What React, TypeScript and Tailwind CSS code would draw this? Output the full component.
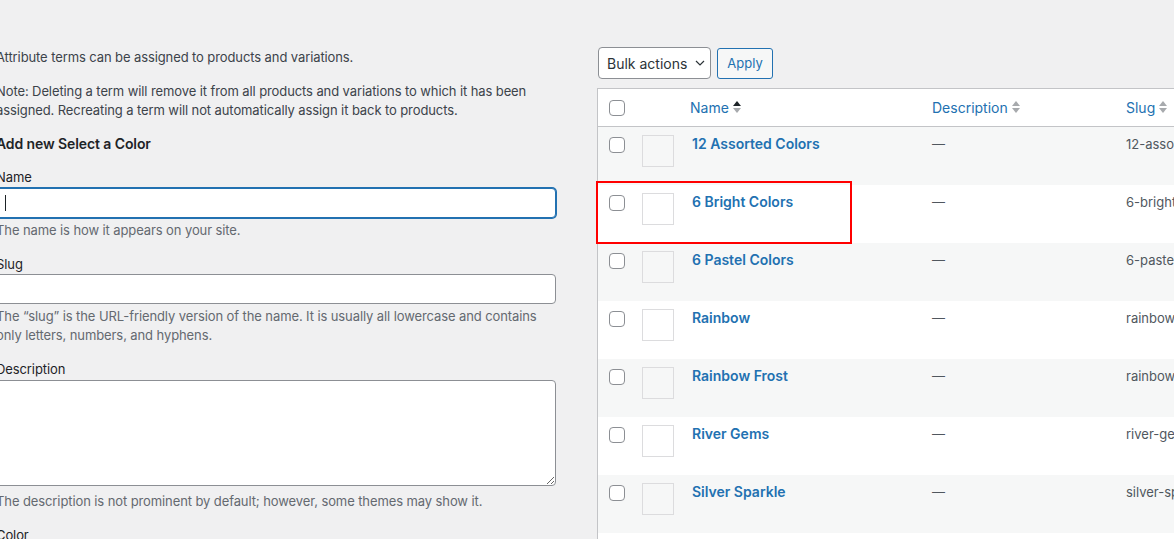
import React from "react";

const terms = [
  { name: "12 Assorted Colors", slug: "12-assorted-colors" },
  { name: "6 Bright Colors", slug: "6-bright-colors" },
  { name: "6 Pastel Colors", slug: "6-pastel-colors" },
  { name: "Rainbow", slug: "rainbow" },
  { name: "Rainbow Frost", slug: "rainbow-frost" },
  { name: "River Gems", slug: "river-gems" },
  { name: "Silver Sparkle", slug: "silver-sparkle" },
  { name: "Starlight", slug: "starlight" },
];

const SortArrows = ({ active }: { active?: boolean }) => (
  <svg width="8" height="12" viewBox="0 0 8 12" className="ml-[4px] shrink-0">
    <path d="M4 0 L8 5 L0 5 Z" fill={active ? "#1d2327" : "#a7aaad"} />
    <path d="M0 7 L8 7 L4 12 Z" fill="#a7aaad" />
  </svg>
);

const Checkbox = () => (
  <div className="w-4 h-4 rounded-[4px] border border-[#8c8f94] bg-white" />
);

const Field = ({
  label,
  help,
  children,
}: {
  label: string;
  help: React.ReactNode;
  children: React.ReactNode;
}) => (
  <div className="mb-[15px]">
    <div className="text-[13px] leading-[19px] text-[#1d2327] mb-[0.5px]">{label}</div>
    {children}
    <p className="text-[13px] leading-[19px] text-[#646970] mt-[3px]">{help}</p>
  </div>
);

export default function App() {
  return (
    <div
      className="w-[1174px] h-[539px] overflow-hidden bg-[#f0f0f1] flex items-start"
      style={{ fontFamily: "Inter, 'Liberation Sans', sans-serif" }}
    >
      {/* Left: add new term */}
      <div className="w-[560px] -ml-[4px] shrink-0 pt-[48px] text-[#3c434a] tracking-[-0.1px]">
        <p className="text-[13px] leading-[19px] mb-[15px]">
          Attribute terms can be assigned to products and variations.
        </p>
        <p className="text-[13px] leading-[19px] mb-[14px]">
          Note: Deleting a term will remove it from all products and variations to which it has been
          assigned. Recreating a term will not automatically assign it back to products.
        </p>
        <h2 className="text-[14px] leading-[19px] font-semibold text-[#1d2327] mb-[15px]">
          Add new Select a Color
        </h2>

        <Field label="Name" help="The name is how it appears on your site.">
          <div className="h-[30px] rounded-[4px] border border-[#2271b1] shadow-[0_0_0_1px_#2271b1] bg-white flex items-center px-[8px]">
            <div className="w-px h-[16px] bg-[#1d2327]" />
          </div>
        </Field>

        <Field
          label="Slug"
          help="The “slug” is the URL-friendly version of the name. It is usually all lowercase and contains only letters, numbers, and hyphens."
        >
          <div className="h-[30px] rounded-[4px] border border-[#8c8f94] bg-white" />
        </Field>

        <Field
          label="Description"
          help="The description is not prominent by default; however, some themes may show it."
        >
          <textarea className="block w-full h-[106px] mb-[6px] rounded-[4px] border border-[#8c8f94] bg-white resize-y outline-none" />
        </Field>

        <div className="text-[13px] leading-[19px] text-[#1d2327]">Color</div>
      </div>

      {/* Right: terms table */}
      <div className="ml-[42px] w-[720px] shrink-0 pt-[47px]">
        <div className="flex items-center gap-[6px] mb-[9px]">
          <div className="h-[32px] w-[113px] rounded-[4px] border border-[#8c8f94] bg-white flex items-center pl-[8px] text-[14px] text-[#2c3338]">
            <span>Bulk actions</span>
            <svg width="10" height="6" viewBox="0 0 10 6" fill="none" stroke="#2c3338" strokeWidth="1.2" className="ml-[8px]">
              <path d="M1 1 L5 5 L9 1" />
            </svg>
          </div>
          <div className="h-[31px] w-[56px] rounded-[3px] border border-[#2271b1] bg-[#f6f7f7] flex items-center justify-center text-[13px] text-[#2271b1] pt-px">
            Apply
          </div>
        </div>

        <div className="relative -ml-px border-l border-t border-[#c3c4c7] bg-white">
          {/* header */}
          <div className="h-[38px] flex items-center border-b border-[#c3c4c7] text-[14px] text-[#2271b1]">
            <div className="w-[44px] pl-[11px]">
              <Checkbox />
            </div>
            <div className="w-[48px]" />
            <div className="w-[242px] flex items-center pb-px">
              Name
              <SortArrows active />
            </div>
            <div className="w-[194px] flex items-center pb-px">
              Description
              <SortArrows />
            </div>
            <div className="flex items-center pb-px">
              Slug
              <SortArrows />
            </div>
          </div>

          {terms.map((t, i) => (
            <div
              key={t.slug}
              className={`h-[58px] flex items-start ${i % 2 === 0 ? "bg-[#f6f7f7]" : "bg-white"}`}
            >
              <div className="w-[44px] pl-[11px] pt-[10px]">
                <Checkbox />
              </div>
              <div className="w-[50px] pt-[8px]">
                <div className="w-[32px] h-[32px] border border-[#dcdcde]" />
              </div>
              <div className="w-[240px] pt-[7px] text-[14px] leading-[20px] font-semibold text-[#2271b1]">
                {t.name}
              </div>
              <div className="w-[194px] pt-[7px] text-[13px] leading-[20px] text-[#50575e]">—</div>
              <div className="pt-[7px] text-[13px] leading-[20px] text-[#50575e] whitespace-nowrap">
                {t.slug}
              </div>
            </div>
          ))}

          {/* highlight around the 6 Bright Colors row */}
          <div className="absolute left-[-2px] top-[92px] w-[256px] h-[63px] border-2 border-[#ff0000] pointer-events-none" />
        </div>
      </div>
    </div>
  );
}
